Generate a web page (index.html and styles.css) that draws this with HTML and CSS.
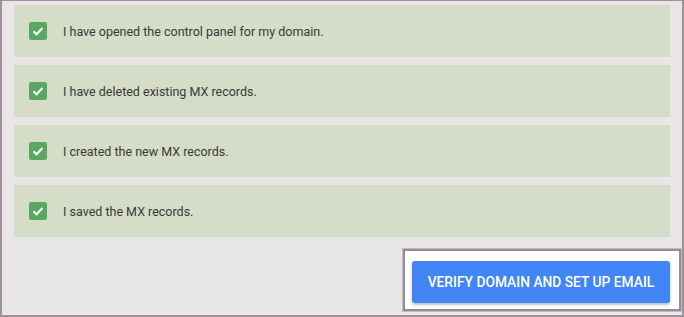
FILE: index.html
```html
<!DOCTYPE html>
<html lang="en">
<head>
    <meta charset="UTF-8">
    <meta name="viewport" content="width=device-width, initial-scale=1.0">
    <title>Verify domain</title>
    <link rel="stylesheet" href="styles.css">
</head>
<body>
    <div class="checklist">
        <label class="check-item">
            <span class="check-box"><svg viewBox="0 0 18 18" width="18" height="18"><path d="M4.5 9.2l3 3 6-6.2" fill="none" stroke="#fff" stroke-width="2"/></svg></span>
            I have opened the control panel for my domain.
        </label>
        <label class="check-item">
            <span class="check-box"><svg viewBox="0 0 18 18" width="18" height="18"><path d="M4.5 9.2l3 3 6-6.2" fill="none" stroke="#fff" stroke-width="2"/></svg></span>
            I have deleted existing MX records.
        </label>
        <label class="check-item">
            <span class="check-box"><svg viewBox="0 0 18 18" width="18" height="18"><path d="M4.5 9.2l3 3 6-6.2" fill="none" stroke="#fff" stroke-width="2"/></svg></span>
            I created the new MX records.
        </label>
        <label class="check-item">
            <span class="check-box"><svg viewBox="0 0 18 18" width="18" height="18"><path d="M4.5 9.2l3 3 6-6.2" fill="none" stroke="#fff" stroke-width="2"/></svg></span>
            I saved the MX records.
        </label>
    </div>

    <div class="actions">
        <div class="highlight">
            <button class="verify-btn">VERIFY DOMAIN AND SET UP EMAIL</button>
        </div>
    </div>
</body>
</html>
```

FILE: styles.css
```css
html, body {
    margin: 0;
    padding: 0;
    height: 100%;
}

body {
    box-sizing: border-box;
    border: 2px solid #a0929a;
    border-top-width: 1px;
    background-color: #e8e6e7;
    font-family: 'Roboto', sans-serif;
    color: #3a3a3a;
    padding: 4px 12px 0 12px;
    overflow: hidden;
}

.checklist {
    display: flex;
    flex-direction: column;
    gap: 8px;
}

.check-item {
    display: flex;
    align-items: center;
    gap: 16px;
    height: 52px;
    padding-left: 15px;
    background-color: #d5dcc7;
    font-size: 12.5px;
}

.check-box {
    width: 18px;
    height: 18px;
    border-radius: 2px;
    background-color: #5aa764;
    display: flex;
}

.actions {
    display: flex;
    justify-content: flex-end;
    margin-top: 24px;
}

.highlight {
    position: relative;
}

/* review highlight frame around the button */
.highlight::before {
    content: "";
    position: absolute;
    top: -12px;
    left: -9px;
    right: -11px;
    bottom: -8px;
    border: 2px solid #9a8a91;
    box-shadow: 0 0 0 1px #c4bbbf;
    background-color: #fff;
}

.verify-btn {
    position: relative;
    display: block;
    width: 258px;
    height: 42px;
    border: none;
    border-radius: 3px;
    background-color: #4285f4;
    color: #fff;
    font-family: 'Roboto', sans-serif;
    font-weight: 500;
    font-size: 13.8px;
    box-shadow: 0 2px 3px rgba(0, 0, 0, 0.25);
    cursor: pointer;
}
```
